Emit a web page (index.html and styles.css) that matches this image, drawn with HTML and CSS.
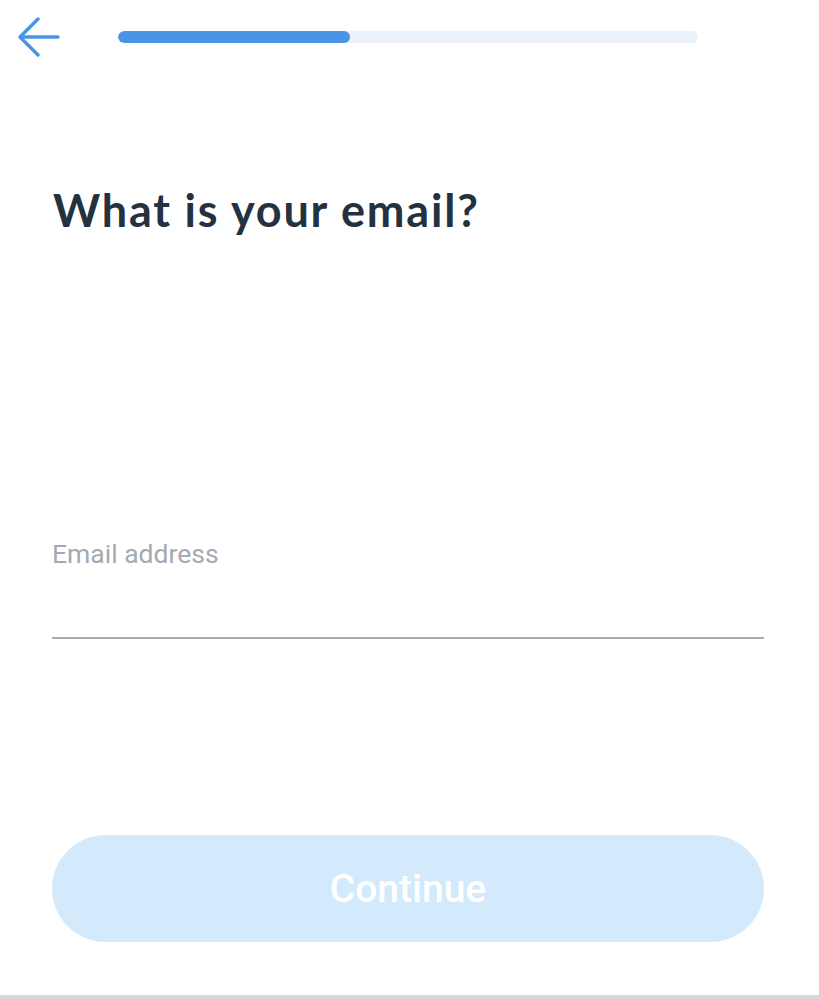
FILE: index.html
```html
<!DOCTYPE html>
<html lang="en">
<head>
    <meta charset="UTF-8">
    <meta name="viewport" content="width=device-width, initial-scale=1.0">
    <title>Sign up - Email</title>
    <link rel="stylesheet" href="styles.css">
</head>
<body>

<div class="screen">
    <header class="top-bar">
        <button class="back" aria-label="Back">
            <svg width="44" height="44" viewBox="0 0 44 44" fill="none" stroke="#4a94e6" stroke-width="3.4" stroke-linecap="round" stroke-linejoin="round">
                <path d="M40 22H4"/>
                <path d="M20 4L2 22l18 18"/>
            </svg>
        </button>
        <div class="progress">
            <div class="progress-fill" style="width: 40%"></div>
        </div>
    </header>

    <h1 class="title">What is your email?</h1>

    <form class="email-form" id="email-form">
        <label class="field">
            <input type="email" id="email" placeholder="Email address">
        </label>
        <button type="submit" class="continue" disabled>Continue</button>
    </form>
</div>

<div class="bottom-strip"></div>

</body>
</html>
```

FILE: styles.css
```css
html, body {
    margin: 0;
    padding: 0;
    background-color: #fff;
}

body {
    font-family: Lato, "Open Sans", sans-serif;
    height: 999px;
    display: flex;
    flex-direction: column;
}

.screen {
    flex: 1;
    display: flex;
    flex-direction: column;
    padding: 0 55px 0 52px;
}

.top-bar {
    display: flex;
    align-items: center;
    height: 74px;
    margin-left: -34px;
}

.back {
    background: none;
    border: none;
    padding: 0;
    width: 44px;
    height: 44px;
    cursor: pointer;
}

.back svg {
    display: block;
}

.progress {
    margin-left: 56px;
    width: 580px;
    height: 12px;
    border-radius: 6px;
    background-color: #ebf1f8;
    overflow: hidden;
}

.progress-fill {
    height: 100%;
    border-radius: 6px;
    background-color: #4a94e6;
}

.title {
    margin: 108px 0 0 1px;
    font-size: 45px;
    font-weight: 700;
    letter-spacing: 1.8px;
    color: #24323f;
    line-height: 56px;
}

.email-form {
    flex: 1;
    display: flex;
    flex-direction: column;
}

.field {
    display: block;
    margin-top: 300px;
}

.field input {
    width: 100%;
    box-sizing: border-box;
    border: none;
    border-bottom: 2px solid #a6acb5;
    padding: 0 0 68px 0;
    font-family: Roboto, sans-serif;
    font-size: 26.5px;
    color: #24323f;
    outline: none;
    background: transparent;
}

.field input::placeholder {
    color: #a3aab3;
}

.continue {
    margin-top: 196px;
    height: 107px;
    border: none;
    border-radius: 54px;
    background-color: #d3eafc;
    color: #fff;
    font-family: Roboto, sans-serif;
    font-weight: 500;
    font-size: 39px;
    cursor: pointer;
}

.bottom-strip {
    height: 4px;
    background-color: #d4d6df;
}
```
